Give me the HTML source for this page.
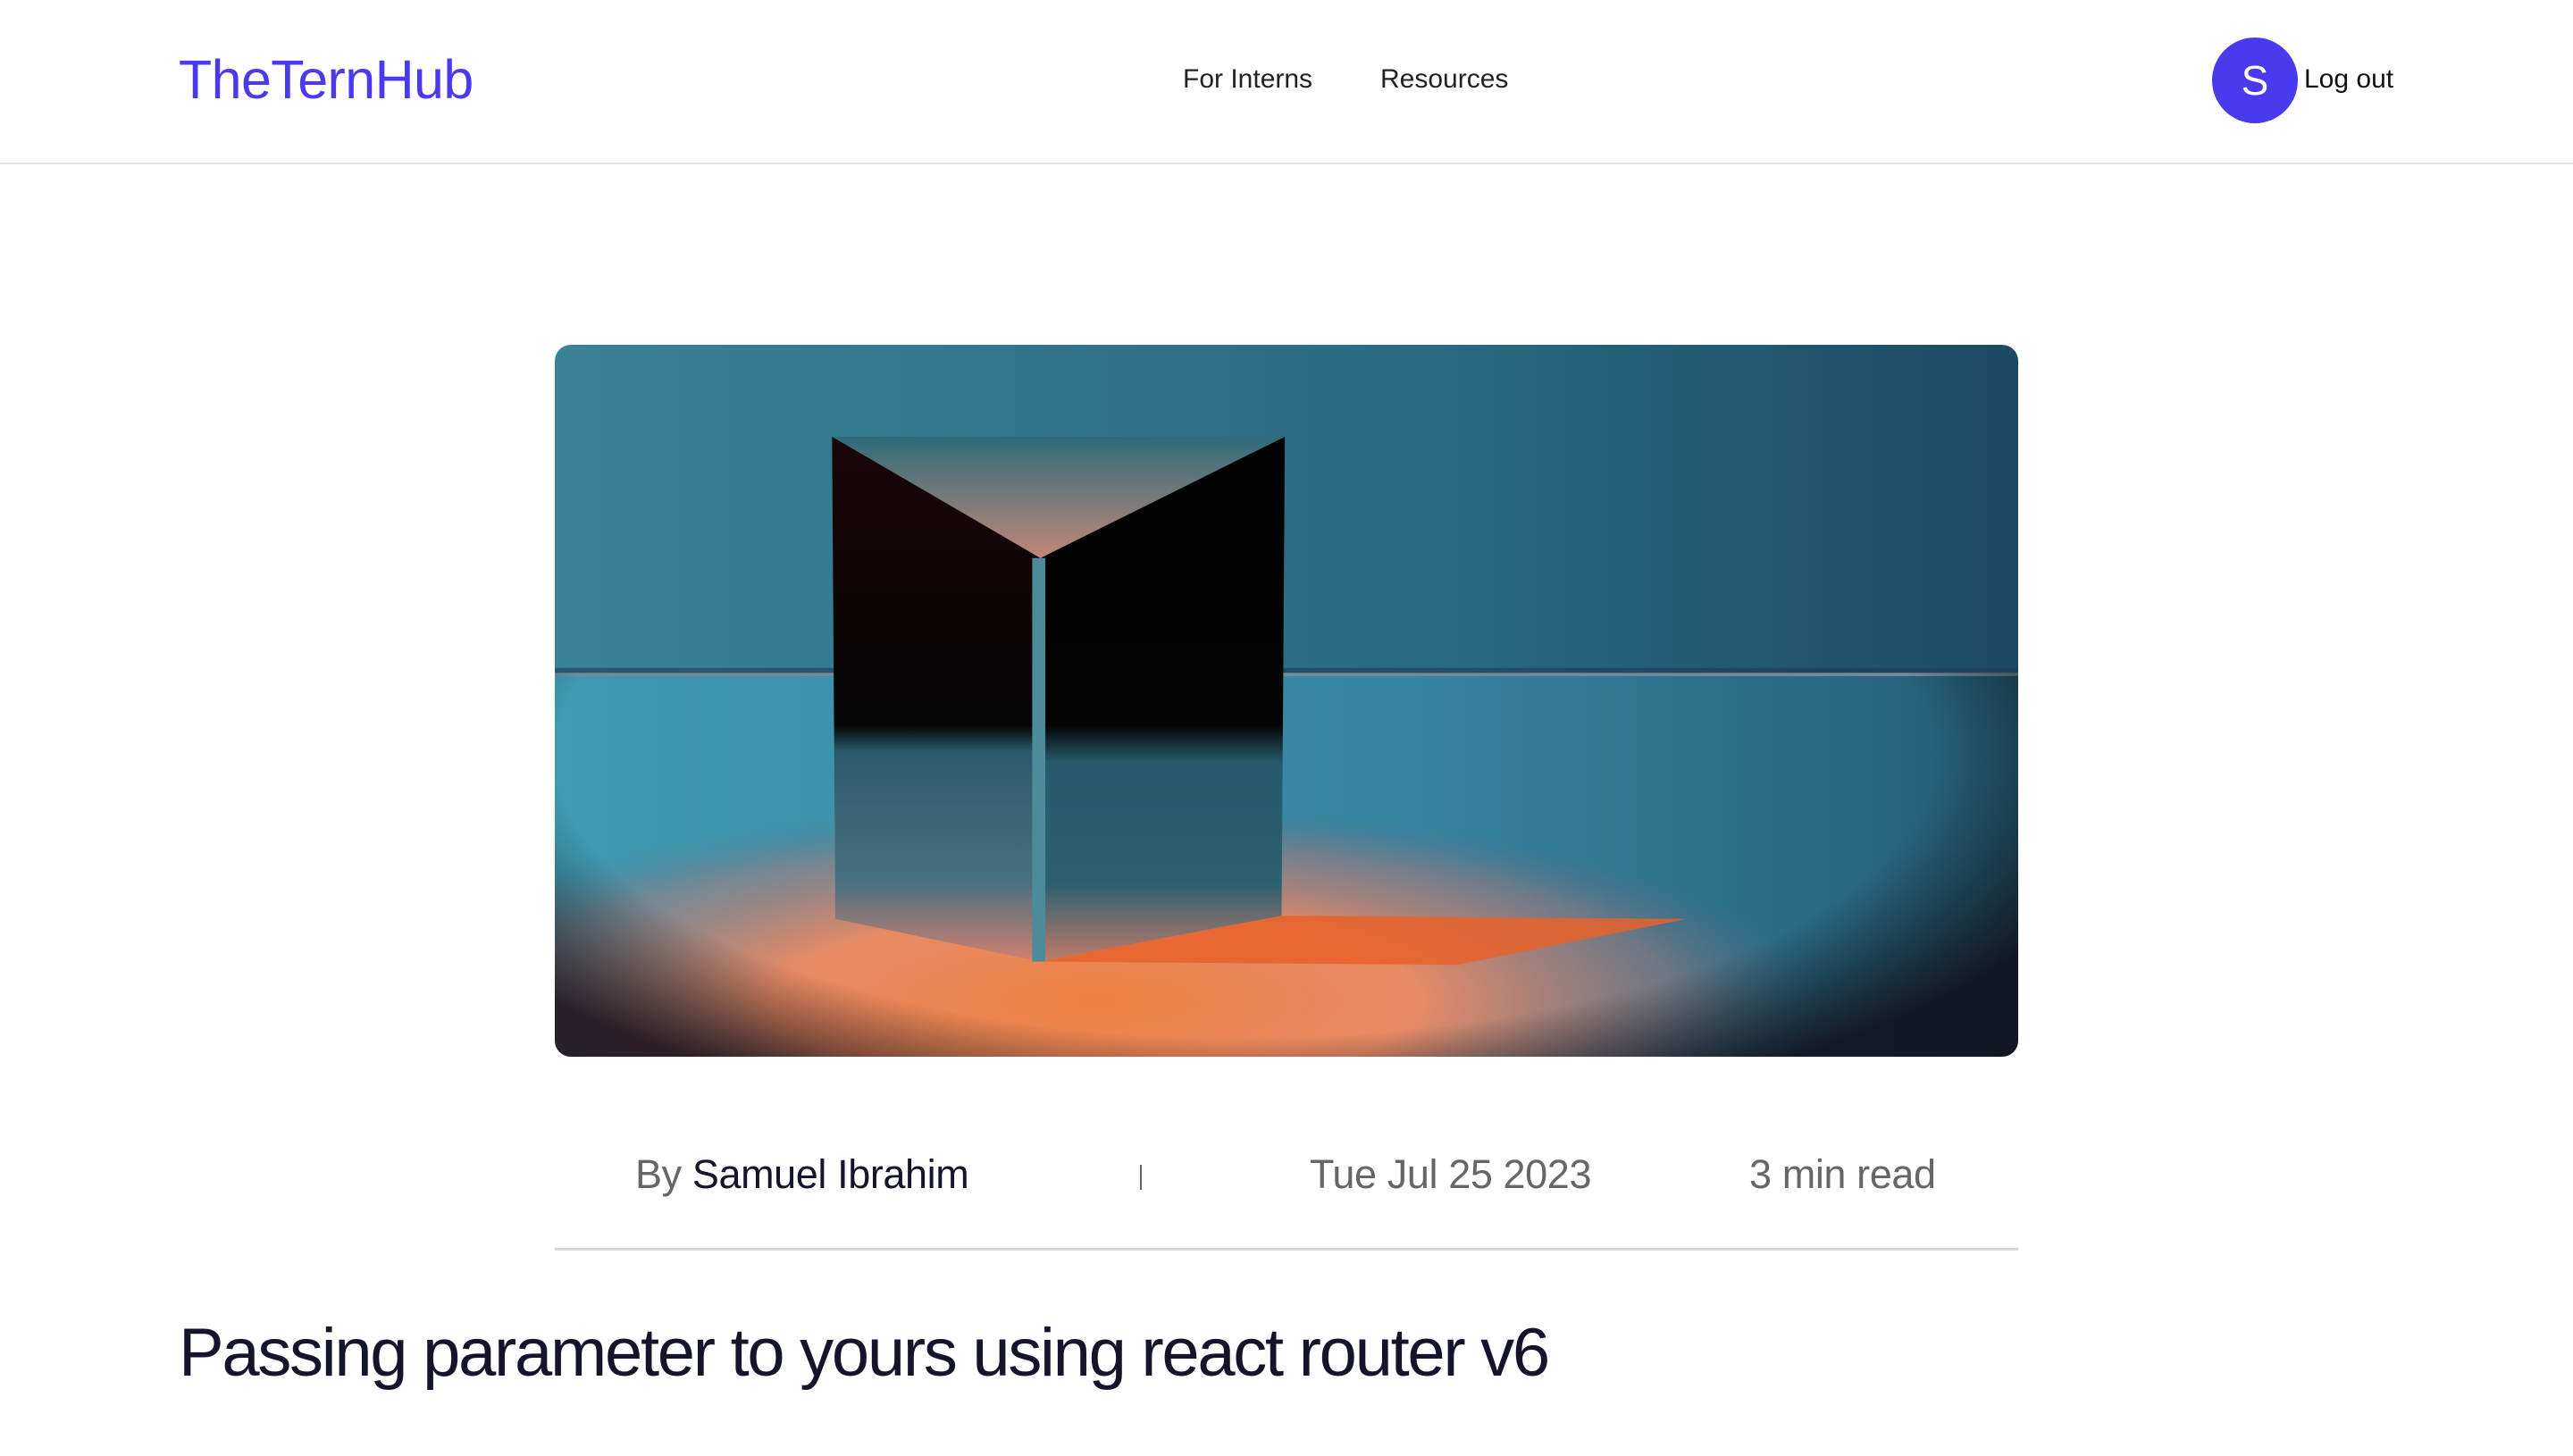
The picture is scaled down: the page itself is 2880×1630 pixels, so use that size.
<!DOCTYPE html>
<html><head><meta charset="utf-8"><style>
*{margin:0;padding:0;box-sizing:border-box}
html,body{width:2880px;height:1630px;background:#fff;overflow:hidden;font-family:"Liberation Sans",sans-serif}
.hdr{position:absolute;left:0;top:0;width:2880px;height:184px;border-bottom:2px solid #e2e2e2}
.logo{position:absolute;left:200px;top:54px;font-size:61px;color:#4a3aee;letter-spacing:-0.6px}
.nav{position:absolute;top:72px;font-size:30px;color:#222}
.av{position:absolute;left:2476px;top:42px;width:96px;height:96px;border-radius:50%;background:#4a3aee;color:#fff;font-size:46px;text-align:center;line-height:96px}
.lo{position:absolute;left:2579px;top:72px;font-size:30px;color:#111}
.img{position:absolute;left:621px;top:386px;width:1638px;height:797px;border-radius:18px;overflow:hidden}
.meta{position:absolute;top:1289px;font-size:45px;color:#666;letter-spacing:-0.4px}
.hr{position:absolute;left:621px;top:1397px;width:1638px;height:3px;background:#d6d6d6}
h1{position:absolute;left:200px;top:1471px;font-size:76px;font-weight:normal;color:#14142b;letter-spacing:-2.3px;white-space:nowrap}
</style></head><body>
<div class="hdr">
<div class="logo">TheTernHub</div>
<div class="nav" style="left:1324px">For Interns</div>
<div class="nav" style="left:1545px">Resources</div>
<div class="av">S</div>
<div class="lo">Log out</div>
</div>
<div class="img">
<svg width="1638" height="797" viewBox="0 0 892 434" preserveAspectRatio="none">
<defs>
<linearGradient id="wall" x1="0" y1="0" x2="1" y2="0"><stop offset="0" stop-color="#3a8296"/><stop offset="0.6" stop-color="#2a6a82"/><stop offset="1" stop-color="#1c4a62"/></linearGradient>
<linearGradient id="floor" x1="0" y1="0" x2="1" y2="0"><stop offset="0" stop-color="#3f9ab2"/><stop offset="0.6" stop-color="#3683a0"/><stop offset="1" stop-color="#245c74"/></linearGradient>
<radialGradient id="glow" gradientUnits="userSpaceOnUse" cx="0" cy="0" r="1" gradientTransform="translate(330 400) scale(440 120)"><stop offset="0" stop-color="#f08040"/><stop offset="0.45" stop-color="#ef8a62" stop-opacity="0.95"/><stop offset="0.8" stop-color="#b07a78" stop-opacity="0.5"/><stop offset="1" stop-color="#6a6a7a" stop-opacity="0"/></radialGradient>
<radialGradient id="vig" gradientUnits="userSpaceOnUse" cx="0" cy="0" r="1" gradientTransform="translate(420 250) scale(560 230)"><stop offset="0.75" stop-color="#000" stop-opacity="0"/><stop offset="1" stop-color="#100510" stop-opacity="0.8"/></radialGradient>
<linearGradient id="lf" x1="0" y1="0" x2="0" y2="1"><stop offset="0" stop-color="#1a0608"/><stop offset="0.55" stop-color="#050505"/><stop offset="0.6" stop-color="#2a5b6c"/><stop offset="0.85" stop-color="#4a7080"/><stop offset="1" stop-color="#d08070"/></linearGradient>
<linearGradient id="rf" x1="0" y1="0" x2="0" y2="1"><stop offset="0" stop-color="#020202"/><stop offset="0.55" stop-color="#040404"/><stop offset="0.62" stop-color="#275a6c"/><stop offset="0.85" stop-color="#2a6070"/><stop offset="1" stop-color="#c07a68"/></linearGradient>
<linearGradient id="tp" x1="0" y1="0" x2="0" y2="1"><stop offset="0" stop-color="#2f6b7a"/><stop offset="1" stop-color="#c08878"/></linearGradient>
</defs>
<rect width="892" height="200" fill="url(#wall)"/>
<rect y="197" width="892" height="6" fill="#1a3c5a" opacity="0.6"/>
<rect y="202" width="892" height="232" fill="url(#floor)"/>
<rect y="240" width="892" height="194" fill="url(#glow)"/>
<polygon points="296,376 443,348 690,350 550,378" fill="#e8622a" opacity="0.85"/>
<rect y="200" width="892" height="234" fill="url(#vig)"/>
<polygon points="169,56 296,130 296,376 171,350" fill="url(#lf)"/>
<polygon points="296,130 445,56 443,348 296,376" fill="url(#rf)"/>
<polygon points="169,56 445,56 296,130" fill="url(#tp)"/>
<rect x="291" y="130" width="8" height="246" fill="#4d8a9a"/>
</svg>
</div>
<div class="meta" style="left:711px">By <span style="color:#14142b">Samuel Ibrahim</span></div>
<div style="position:absolute;left:1276px;top:1304px;width:2px;height:28px;background:#666"></div>
<div class="meta" style="left:1466px">Tue Jul 25 2023</div>
<div class="meta" style="left:1958px">3 min read</div>
<div class="hr"></div>
<h1>Passing parameter to yours using react router v6</h1>
</body></html>
